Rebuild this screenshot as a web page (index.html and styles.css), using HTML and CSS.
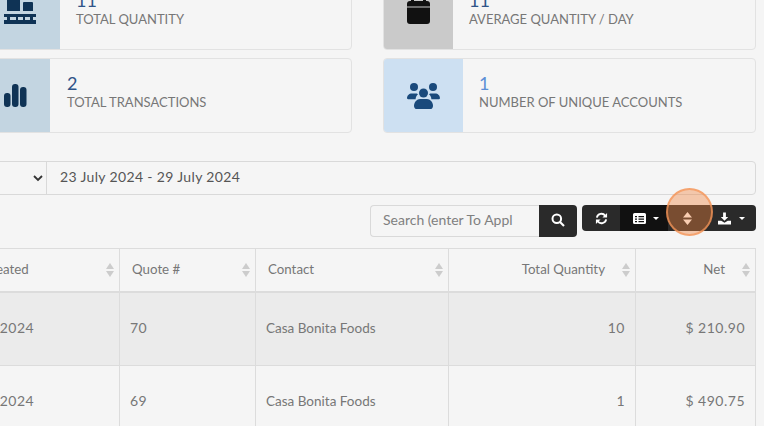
FILE: index.html
```html
<!DOCTYPE html>
<html lang="en">
<head>
    <meta charset="UTF-8">
    <title>Quotes report</title>
    <link rel="stylesheet" href="styles.css">
</head>
<body>
    <div class="cards">
        <div class="card">
            <div class="card-icon icon-steel wide">
                <svg class="raised" width="32" height="26" viewBox="0 0 32 26"><path fill="#0f3355" d="M3 0h13v13H3zM20 4h8a1 1 0 0 1 1 1v8H19V5a1 1 0 0 1 1-1z"/><path fill="#0f3355" fill-rule="evenodd" d="M0 16h32v3h-3v3h3v4H0v-4h3v-3H0zM6 19v3h6v-3zM14 19v3h5v-3zM21 19v3h5v-3z"/></svg>
            </div>
            <div class="card-body">
                <div class="card-num">11</div>
                <div class="card-label">TOTAL QUANTITY</div>
            </div>
        </div>
        <div class="card">
            <div class="card-icon icon-grey medium">
                <svg class="raised" width="23" height="26" viewBox="0 0 23 26"><g fill="#111"><rect x="4" y="0" width="3" height="5" rx="1"/><rect x="16" y="0" width="3" height="5" rx="1"/><path d="M3 3h17a3 3 0 0 1 3 3v2.500H0V6a3 3 0 0 1 3-3z"/><path d="M0 9.500h23V23a3 3 0 0 1-3 3H3a3 3 0 0 1-3-3z"/></g></svg>
            </div>
            <div class="card-body">
                <div class="card-num">11</div>
                <div class="card-label">AVERAGE QUANTITY / DAY</div>
            </div>
        </div>
        <div class="card">
            <div class="card-icon icon-steel narrow">
                <svg width="23" height="23" viewBox="0 0 23 23"><g fill="#0f3355"><rect x="0" y="9" width="6.500" height="14" rx="3"/><rect x="8" y="0" width="6.500" height="23" rx="3"/><rect x="16" y="3" width="6.500" height="20" rx="3"/></g></svg>
            </div>
            <div class="card-body">
                <div class="card-num">2</div>
                <div class="card-label">TOTAL TRANSACTIONS</div>
            </div>
        </div>
        <div class="card">
            <div class="card-icon icon-blue large">
                <svg width="33" height="26" viewBox="0 0 33 26"><g fill="#1a4a7c"><circle cx="7" cy="4" r="4"/><circle cx="26" cy="4" r="4"/><circle cx="16.500" cy="10" r="4.500"/><path d="M0 15.500c0-3 2-5 5-5h4c1 0 1.500.3 2 .7-1.500 1.300-2.300 3-2.400 5H1z"/><path d="M33 15.500c0-3-2-5-5-5h-4c-1 0-1.500.3-2 .7 1.500 1.300 2.300 3 2.400 5H32z"/><path d="M7 23c0-4 3-7 6-7h7c3 0 6 3 6 7 0 1.500-1 3-2 3H9c-1 0-2-1.500-2-3z"/></g></svg>
            </div>
            <div class="card-body">
                <div class="card-num num-light">1</div>
                <div class="card-label">NUMBER OF UNIQUE ACCOUNTS</div>
            </div>
        </div>
    </div>

    <div class="date-row">
        <div class="date-select">
            <svg width="10" height="7" viewBox="0 0 10 7"><path d="M1 1l4 4 4-4" fill="none" stroke="#333" stroke-width="1.800"/></svg>
        </div>
        <div class="date-input">23 July 2024 - 29 July 2024</div>
    </div>

    <div class="toolbar">
        <div class="search">
            <div class="search-input">Search (enter To Appl</div>
            <button class="search-btn">
                <svg width="14" height="14" viewBox="0 0 14 14"><circle cx="5.800" cy="5.800" r="4.300" fill="none" stroke="#fff" stroke-width="2"/><path d="M9 9l4 4" stroke="#fff" stroke-width="2.200"/></svg>
            </button>
        </div>
        <div class="btn-group">
            <button class="tool-btn btn-refresh">
                <svg width="13" height="13" viewBox="0 0 14 14"><path d="M2 6a5 5 0 0 1 9-2M12 8a5 5 0 0 1-9 2" fill="none" stroke="#fff" stroke-width="2"/><path fill="#fff" d="M13 1v5H8zM1 13V8h5z"/></svg>
            </button>
            <button class="tool-btn btn-columns">
                <svg width="13" height="11" viewBox="0 0 13 11"><path fill="#fff" fill-rule="evenodd" d="M1.500 0h10A1.500 1.500 0 0 1 13 1.500v8a1.500 1.500 0 0 1-1.500 1.500h-10A1.500 1.500 0 0 1 0 9.500v-8A1.500 1.500 0 0 1 1.500 0zM2 3v1.300h2V3zM5.500 3v1.300H11V3zM2 5.500v1.300h2V5.500zM5.500 5.500v1.300H11V5.500zM2 8v1.300h2V8zM5.500 8v1.300H11V8z"/></svg>
                <span class="caret"></span>
            </button>
            <button class="tool-btn btn-sort">
                <svg width="9" height="13" viewBox="0 0 9 13"><path fill="#fff" d="M4.500 0L9 5.500H0zM4.500 13L0 7.500h9z"/></svg>
            </button>
            <button class="tool-btn btn-download">
                <svg width="13" height="13" viewBox="0 0 14 13"><path fill="#fff" d="M5.500 0h3v5H11L7 9 3 5h2.500zM0 9h3.500L7 11l3.500-2H14v4H0z"/></svg>
                <span class="caret"></span>
            </button>
            <span class="highlight"></span>
        </div>
    </div>

    <table class="report">
        <colgroup>
            <col class="col-date"><col class="col-quote"><col class="col-contact"><col class="col-qty"><col class="col-net">
        </colgroup>
        <thead>
            <tr>
                <th>Date Created</th>
                <th>Quote #</th>
                <th>Contact</th>
                <th class="text-right">Total Quantity</th>
                <th class="text-right">Net</th>
            </tr>
        </thead>
        <tbody>
            <tr class="odd">
                <td class="num">29 July 2024</td>
                <td class="num">70</td>
                <td>Casa Bonita Foods</td>
                <td class="num text-right">10</td>
                <td class="num text-right">$ 210.90</td>
            </tr>
            <tr>
                <td class="num">29 July 2024</td>
                <td class="num">69</td>
                <td>Casa Bonita Foods</td>
                <td class="num text-right">1</td>
                <td class="num text-right">$ 490.75</td>
            </tr>
        </tbody>
    </table>
</body>
</html>
```

FILE: styles.css
```css
html, body {
    height: 100%;
    overflow: hidden;
}

body {
    margin: 0;
    background-color: #f5f5f5;
    font-family: Lato, "Open Sans", sans-serif;
    color: #555;
}

button {
    padding: 0;
}

.cards {
    display: grid;
    grid-template-columns: 373px 373px;
    grid-auto-rows: 75px;
    gap: 8px 31px;
    margin: -25px 0 0 -21px;
}

.card {
    display: flex;
    border: 1px solid #e2e2e2;
    border-radius: 4px;
    overflow: hidden;
}

.card-icon {
    display: flex;
    align-items: center;
    justify-content: center;
    flex-shrink: 0;
}

.raised {
    margin-bottom: 3px;
}

.icon-steel { background-color: #c3d5e1; }
.icon-grey { background-color: #cacaca; }
.icon-blue { background-color: #cde0f2; }

.wide { width: 80px; }
.medium { width: 69px; }
.narrow { width: 70px; }
.large { width: 79px; }

.card-body {
    padding: 14px 16px 0;
}

.narrow + .card-body {
    padding-left: 17px;
}

.medium + .card-body {
    padding-left: 16px;
}

.card-num {
    font-size: 18px;
    line-height: 20px;
    color: #2f5488;
}

.num-light {
    color: #5b8fd6;
}

.card-label {
    font-size: 13px;
    line-height: 18px;
    color: #777;
}

.date-row {
    display: flex;
    height: 34px;
    margin: 28px 8px 0 -21px;
    box-sizing: border-box;
    border: 1px solid #d9d9d9;
    border-radius: 0 4px 4px 0;
    font-size: 14px;
    color: #555;
}

.date-select {
    width: 63px;
    display: flex;
    align-items: center;
    justify-content: flex-end;
    padding-right: 3px;
    border-right: 1px solid #d9d9d9;
}

.date-input {
    padding: 0 13px;
    line-height: 30px;
    letter-spacing: 0.35px;
}

.toolbar {
    display: flex;
    justify-content: flex-end;
    align-items: flex-start;
    gap: 5px;
    margin: 10px 8px 0 0;
}

.search {
    display: flex;
    height: 32px;
}

.search-input {
    width: 169px;
    box-sizing: border-box;
    padding: 0 12px;
    line-height: 28px;
    font-size: 14px;
    color: #808080;
    border: 1px solid #d9d9d9;
    border-right: none;
    border-radius: 4px 0 0 4px;
}

.search-btn {
    width: 38px;
    border: none;
    border-radius: 0 4px 4px 0;
    background-color: #2a2a2a;
}

.btn-group {
    position: relative;
    display: flex;
    height: 26px;
}

.tool-btn {
    display: flex;
    align-items: center;
    justify-content: center;
    gap: 8px;
    height: 26px;
    border: none;
    background-color: #2a2a2a;
}

.btn-refresh { width: 38px; border-radius: 4px 0 0 4px; }
.btn-columns { width: 48px; padding-left: 4px; gap: 7px; background-color: #111; }
.btn-sort { width: 38px; }
.btn-download { width: 50px; border-radius: 0 4px 4px 0; }

.caret {
    width: 0;
    height: 0;
    border-left: 3px solid transparent;
    border-right: 3px solid transparent;
    border-top: 3px solid #fff;
}

.highlight {
    position: absolute;
    left: 84px;
    top: -17px;
    width: 43px;
    height: 44px;
    border: 2px solid rgba(244, 150, 90, 0.75);
    border-radius: 50%;
    background-color: rgba(240, 130, 60, 0.4);
}

.report {
    width: 818px;
    margin: 11px 0 0 -62px;
    border-collapse: collapse;
    table-layout: fixed;
    font-size: 13.5px;
}

.col-date { width: 181px; }
.col-quote { width: 136px; }
.col-contact { width: 193px; }
.col-qty { width: 187px; }
.col-net { width: 120px; }

th, td {
    border: 1px solid #dcdcdc;
    padding: 0 10px;
    text-align: left;
}

/* sort arrows on every header */
th {
    position: relative;
    height: 40px;
    padding-left: 12px;
    padding-bottom: 2px;
    border-bottom-width: 2px;
    font-size: 13.3px;
    font-weight: 400;
    color: #777;
}

th::before, th::after {
    content: "";
    position: absolute;
    right: 5px;
    border-left: 4.5px solid transparent;
    border-right: 4.5px solid transparent;
}

th::before {
    top: 14px;
    border-bottom: 6px solid #ccc;
}

th::after {
    top: 22px;
    border-top: 6px solid #ccc;
}

th.text-right {
    padding-right: 30px;
}

td {
    height: 69px;
    padding-bottom: 3px;
    color: #777;
}

.num {
    font-size: 14px;
    letter-spacing: 0.5px;
}

.odd td {
    background-color: #ebebeb;
}

.text-right {
    text-align: right;
}
```
